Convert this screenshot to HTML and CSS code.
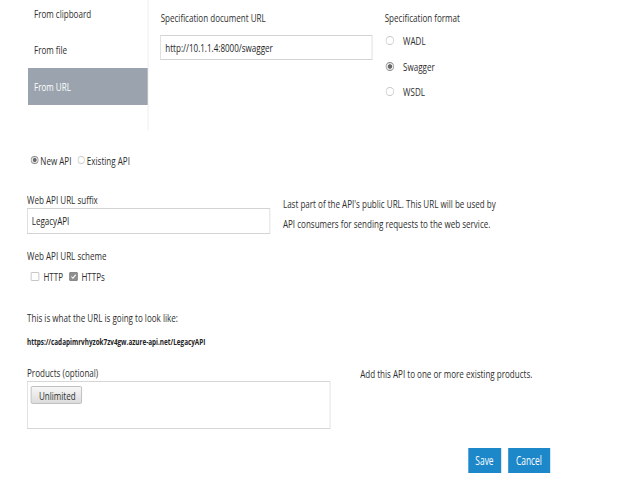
FILE: index.html
```html
<!DOCTYPE html>
<html>
<head>
<meta charset="utf-8">
<link rel="stylesheet" href="styles.css">
</head>
<body>
<div class="viewport">
<div class="stage">
  <div class="top">
    <div class="sidebar">
      <div class="side-item">From clipboard</div>
      <div class="side-item">From file</div>
      <div class="side-item active">From URL</div>
    </div>
    <div class="spec-url">
      <div class="label">Specification document URL</div>
      <div class="input url-input">http://10.1.1.4:8000/swagger</div>
    </div>
    <div class="spec-format">
      <div class="label">Specification format</div>
      <div class="radio-row"><span class="radio"></span><span>WADL</span></div>
      <div class="radio-row"><span class="radio checked"></span><span>Swagger</span></div>
      <div class="radio-row"><span class="radio"></span><span>WSDL</span></div>
    </div>
  </div>

  <div class="api-choice">
    <span class="radio small checked"></span><span class="choice-text">New API</span>
    <span class="radio small"></span><span>Existing API</span>
  </div>

  <div class="suffix-row">
    <div class="suffix-field">
      <div class="label">Web API URL suffix</div>
      <div class="input suffix-input">LegacyAPI</div>
    </div>
    <div class="help">Last part of the API's public URL. This URL will be used by<br>API consumers for sending requests to the web service.</div>
  </div>

  <div class="scheme">
    <div class="label">Web API URL scheme</div>
    <div class="checks">
      <span class="check"></span><span class="check-text">HTTP</span>
      <span class="check checked"><svg viewBox="0 0 10 8" width="10" height="7" preserveAspectRatio="none"><path d="M2 4.2 L4.2 6 L8.2 2" fill="none" stroke="#fff" stroke-width="1.3"/></svg></span><span>HTTPs</span>
    </div>
  </div>

  <div class="preview-label">This is what the URL is going to look like:</div>
  <div class="preview-url">https://cadapimrvhyzok7zv4gw.azure-api.net/LegacyAPI</div>

  <div class="products-row">
    <div class="products-field">
      <div class="label">Products (optional)</div>
      <div class="products-box"><span class="tag">Unlimited</span></div>
    </div>
    <div class="products-help">Add this API to one or more existing products.</div>
  </div>

  <div class="actions">
    <button class="btn save">Save</button>
    <button class="btn cancel">Cancel</button>
  </div>
</div>
</div>
</body>
</html>
```

FILE: styles.css
```css
html, body {
  margin: 0;
  padding: 0;
  background: #fff;
}
body {
  font-family: "Open Sans", "Noto Sans", sans-serif;
  font-size: 11.5px;
  color: #2e2e2e;
}
.viewport {
  width: 640px;
  height: 480px;
  overflow: hidden;
}
/* The whole form is drawn horizontally condensed (x 0.7), as in the source capture */
.stage {
  width: 914px;
  padding-left: 38.6px;
  box-sizing: border-box;
  transform: scaleX(0.7);
  transform-origin: 0 0;
}
.top {
  display: flex;
  margin-top: -4px;
  height: 134px;
}
.sidebar {
  width: 171.4px;
  margin-left: 1.4px;
  border-right: 1.4px solid #e6e6e6;
}
.side-item {
  height: 36px;
  line-height: 36px;
  padding-left: 8.6px;
}
.side-item.active {
  background: #9ba4ae;
  color: #fff;
  height: 37px;
  line-height: 37px;
}
.label {
  line-height: 18px;
}
.spec-url {
  margin-left: 17.1px;
  padding-top: 13px;
  width: 303px;
}
.input {
  border: 1px solid #d3d3d3;
  border-left-width: 1.4px;
  border-right-width: 1.4px;
  box-sizing: border-box;
  padding-left: 5.7px;
  color: #1e1e1e;
}
.url-input {
  margin-top: 8px;
  height: 25px;
  line-height: 23px;
}
.spec-format {
  margin-left: 17.1px;
  padding-top: 13px;
}
.spec-format .label {
  margin-bottom: 1px;
}
.radio-row {
  display: flex;
  align-items: center;
  height: 25.5px;
}
.radio {
  display: inline-block;
  width: 10px;
  height: 7px;
  border: 1px solid #c8c8c8;
  border-left-width: 1.4px;
  border-right-width: 1.4px;
  border-radius: 50%;
  margin-left: 1.4px;
  margin-right: 12.9px;
  background: #fff;
  box-sizing: content-box;
}
.radio.checked {
  border-color: #8c8c8c;
  background: radial-gradient(ellipse closest-side, #6a6a6a 0 55%, #e6e6e6 70%);
}
.api-choice {
  display: flex;
  align-items: center;
  margin-top: 21px;
  margin-left: 5.7px;
  height: 18px;
}
.radio.small {
  width: 8.6px;
  height: 6px;
  margin-left: 0;
  margin-right: 2.8px;
}
.choice-text {
  margin-right: 8.6px;
}
.suffix-row {
  display: flex;
  margin-top: 23px;
}
.suffix-field {
  width: 347px;
}
.suffix-field .label {
  line-height: 16px;
}
.suffix-input {
  height: 26px;
  line-height: 24px;
}
.help {
  margin-left: 18.6px;
  margin-top: 2px;
  line-height: 20px;
}
.scheme {
  margin-top: 13px;
}
.checks {
  display: flex;
  align-items: center;
  height: 20px;
  margin-top: 1px;
  margin-left: 5.7px;
}
.check {
  display: inline-flex;
  align-items: center;
  justify-content: center;
  width: 10px;
  height: 7px;
  border: 1px solid #bdbdbd;
  border-left-width: 1.4px;
  border-right-width: 1.4px;
  border-radius: 1px;
  margin-right: 5.7px;
  background: #fff;
}
.check.checked {
  background: #8f8f8f;
  border-color: #7d7d7d;
}
.check-text {
  margin-right: 8.6px;
}
.preview-label {
  margin-top: 23px;
  line-height: 18px;
}
.preview-url {
  margin-top: 9px;
  font-size: 9.1px;
  font-weight: bold;
  line-height: 12px;
  color: #222;
}
.products-row {
  display: flex;
  margin-top: 18px;
}
.products-field {
  width: 433px;
}
.products-field .label {
  line-height: 14px;
}
.products-box {
  margin-top: 1px;
  border: 1px solid #d6d6d6;
  border-left-width: 1.4px;
  border-right-width: 1.4px;
  height: 48px;
  box-sizing: border-box;
  padding: 4px 0 0 4.3px;
}
.tag {
  display: inline-flex;
  align-items: center;
  justify-content: center;
  width: 73px;
  height: 18px;
  box-sizing: border-box;
  border: 1px solid #b5b5b5;
  border-left-width: 1.4px;
  border-right-width: 1.4px;
  border-radius: 2px;
  background: linear-gradient(#f7f7f7, #dcdcdc);
  padding-left: 3px;
}
.products-help {
  margin-left: 43px;
  line-height: 16px;
}
.actions {
  display: flex;
  gap: 10px;
  margin-top: 19px;
  margin-left: 630px;
}
.btn {
  font-family: inherit;
  font-size: 12px;
  color: #fff;
  background: #1c87c9;
  border: none;
  height: 25px;
  padding: 0;
  margin: 0;
}
.btn.save {
  width: 47px;
}
.btn.cancel {
  width: 60px;
}
```
